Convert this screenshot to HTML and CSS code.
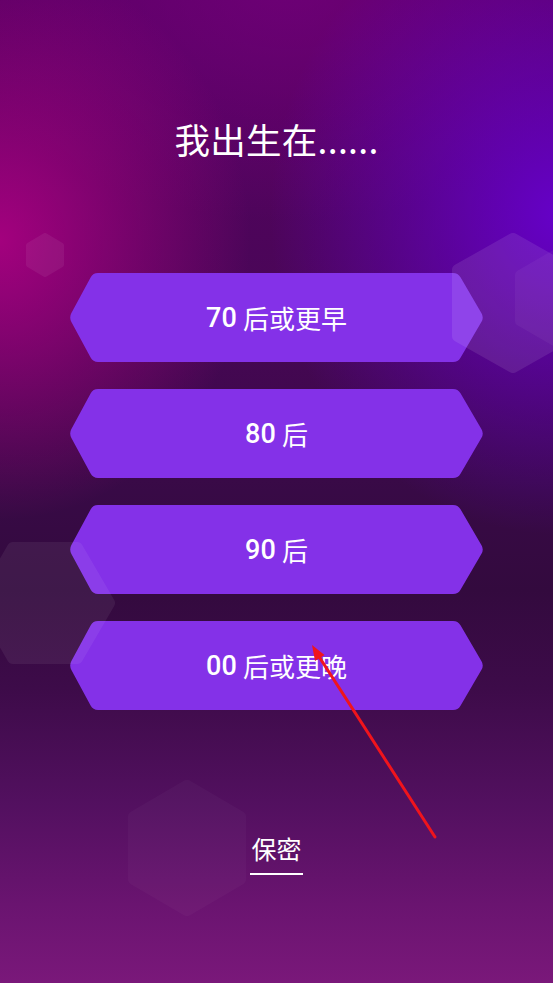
FILE: index.html
```html
<!DOCTYPE html>
<html lang="zh">
<head>
<meta charset="utf-8">
<title>我出生在</title>
<link rel="stylesheet" href="styles.css">
</head>
<body>
<div class="screen">
  <h1 class="title">我出生在......</h1>
  <div class="options">
    <button class="option"><span class="num">70</span> 后或更早</button>
    <button class="option"><span class="num">80</span> 后</button>
    <button class="option"><span class="num">90</span> 后</button>
    <button class="option"><span class="num">00</span> 后或更晚</button>
  </div>
  <div class="secret-row"><span class="secret">保密</span></div>

  <svg class="overlay" width="553" height="983" viewBox="0 0 553 983" aria-hidden="true">
    <g opacity="0.06" fill="#fff" stroke="#fff" stroke-width="6" stroke-linejoin="round">
      <polygon points="45,236 61,245.5 61,264.5 45,274 29,264.5 29,245.5"/>
    </g>
    <g opacity="0.09" fill="#fff" stroke="#fff" stroke-width="12" stroke-linejoin="round">
      <polygon points="513,239 568,270 568,336 513,367 458,336 458,270"/>
    </g>
    <g opacity="0.04" fill="#fff" stroke="#fff" stroke-width="10" stroke-linejoin="round">
      <polygon points="560,252 600,275 600,321 560,344 520,321 520,275"/>
    </g>
    <g opacity="0.06" fill="#fff" stroke="#fff" stroke-width="12" stroke-linejoin="round">
      <polygon points="109,603 77,548 13,548 -19,603 13,658 77,658"/>
    </g>
    <g opacity="0.025" fill="#fff" stroke="#fff" stroke-width="12" stroke-linejoin="round">
      <polygon points="187,786 240,817 240,879 187,910 134,879 134,817"/>
    </g>
    <line x1="435" y1="837" x2="318" y2="655" stroke="#f0141c" stroke-width="3" stroke-linecap="round"/>
    <polygon points="312,645 324.5,655 315,661" fill="#f0141c"/>
  </svg>
</div>
</body>
</html>
```

FILE: styles.css
```css
html, body {
  margin: 0;
  padding: 0;
}

body {
  width: 553px;
  height: 983px;
  overflow: hidden;
  font-family: "Noto Sans CJK SC", "Noto Sans", sans-serif;
}

.screen {
  position: relative;
  width: 553px;
  height: 983px;
  box-sizing: border-box;
  padding-top: 119px;
  display: flex;
  flex-direction: column;
  align-items: center;
  background:
    radial-gradient(250px 280px at 0 240px, rgba(178, 0, 132, 0.85) 0%, rgba(178, 0, 132, 0) 100%),
    radial-gradient(290px 320px at 560px 215px, rgba(104, 0, 212, 0.9) 0%, rgba(104, 0, 212, 0) 100%),
    radial-gradient(360px 240px at 290px -20px, rgba(118, 0, 126, 0.7) 0%, rgba(118, 0, 126, 0) 100%),
    linear-gradient(180deg, #580062 0%, #4a0658 30%, #380a46 50%, #330a3e 60%, #3d0b49 70%, #531060 82%, #6a1470 92%, #7a187a 100%);
}

.title {
  margin: 0;
  font-size: 35.5px;
  line-height: 40px;
  font-weight: 400;
  color: #ffffff;
  letter-spacing: 0.3px;
}

.options {
  margin-top: 114px;
  display: flex;
  flex-direction: column;
  gap: 27px;
}

.option {
  width: 415px;
  height: 89px;
  border: 0;
  padding: 0;
  background: #8431e8;
  color: #ffffff;
  font-family: "Noto Sans CJK SC", sans-serif;
  font-size: 26px;
  line-height: 30px;
  display: flex;
  align-items: center;
  justify-content: center;
  clip-path: path("M29,0 L384,0 Q389,0 391.5,4.3 L412.5,40.2 Q415,44.5 412.5,48.8 L391.5,84.7 Q389,89 384,89 L29,89 Q24,89 21.6,84.6 L2.4,48.9 Q0,44.5 2.4,40.1 L21.6,4.4 Q24,0 29,0 Z");
  white-space: pre;
}

.num {
  font-family: "Roboto", sans-serif;
  font-size: 27px;
  font-weight: 500;
  letter-spacing: 0.3px;
}

.secret-row {
  margin-top: 123px;
}

.secret {
  display: inline-block;
  font-size: 25px;
  line-height: 30px;
  color: #ffffff;
  padding: 0 1px 10px;
  border-bottom: 2px solid #ffffff;
}

.overlay {
  position: absolute;
  left: 0;
  top: 0;
  pointer-events: none;
}
```
